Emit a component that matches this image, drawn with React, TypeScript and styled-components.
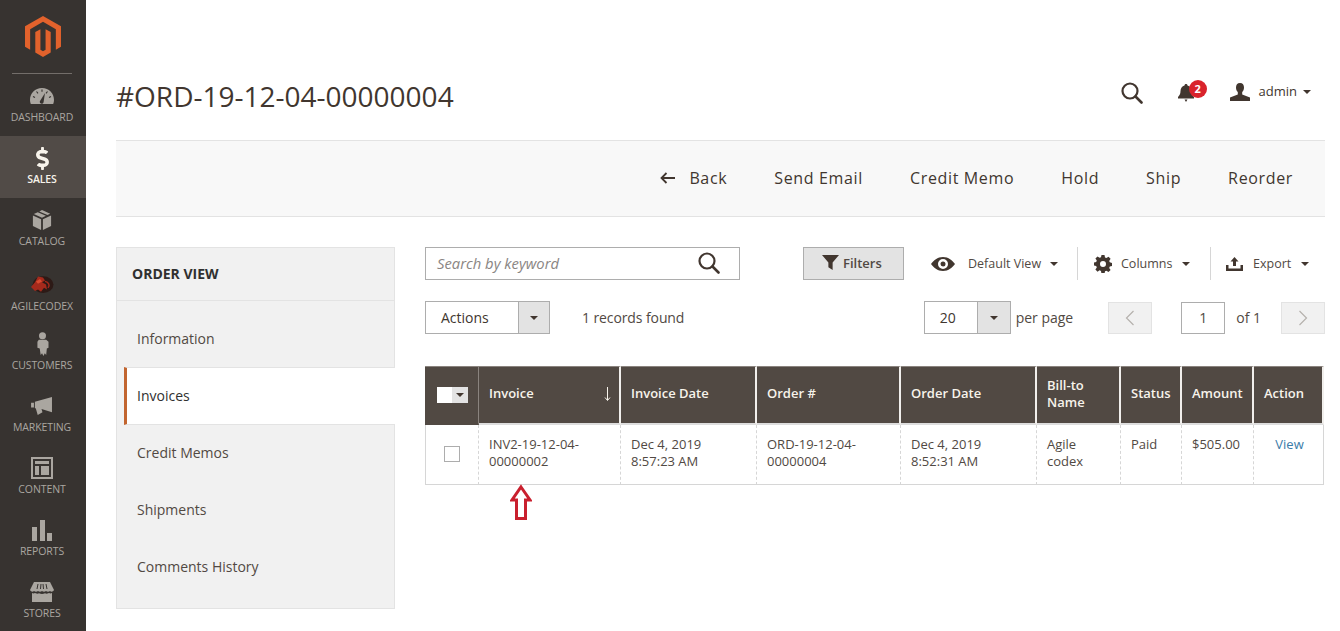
import React from "react";
import styled, { createGlobalStyle } from "styled-components";
import { FaDollarSign } from "react-icons/fa";

const GlobalStyle = createGlobalStyle`
  html, body { margin: 0; padding: 0; background: #fff; }
  body { font-family: "Open Sans", "Liberation Sans", sans-serif; color: #303030; }
  * { box-sizing: border-box; }
`;

const Page = styled.div`
  display: flex;
  width: 1340px;
  height: 631px;
  overflow: hidden;
`;

const Sidebar = styled.nav`
  width: 86px;
  flex: none;
  background: #373330;
  display: flex;
  flex-direction: column;
  align-items: stretch;
`;

const LogoBox = styled.div`
  height: 74px;
  flex: none;
  padding-top: 16px;
  display: flex;
  justify-content: center;
  align-items: flex-start;
  position: relative;
  &::after {
    content: "";
    position: absolute;
    left: 12px;
    right: 14px;
    bottom: 0;
    height: 1px;
    background: #736e6a;
  }
`;

const NavItem = styled.div<{ $active?: boolean; $h?: number }>`
  height: ${(p) => p.$h ?? 62}px;
  flex: none;
  background: ${(p) => (p.$active ? "#514b47" : "transparent")};
  color: ${(p) => (p.$active ? "#f7f3eb" : "#aaa6a0")};
  display: flex;
  flex-direction: column;
  align-items: center;
  justify-content: flex-end;
  padding: 0 2px 12px 0;
`;

const NavIcon = styled.div`
  height: 26px;
  display: flex;
  align-items: center;
  justify-content: center;
  margin-bottom: 1px;
`;

const NavLabel = styled.span<{ $active?: boolean }>`
  font-size: 10.5px;
  line-height: 14px;
  letter-spacing: -0.1px;
  font-weight: ${(p) => (p.$active ? 600 : 400)};
  text-transform: uppercase;
`;

const Main = styled.main`
  flex: 1;
  min-width: 0;
  padding: 0 15px 0 30px;
`;

const PageHeader = styled.header`
  height: 140px;
  padding-top: 54px;
  display: flex;
  align-items: center;
  justify-content: space-between;
`;

const Title = styled.h1`
  margin: -2px 0 0;
  font-size: 28px;
  font-weight: 400;
  color: #41362f;
`;

const HeaderTools = styled.div`
  display: flex;
  align-items: center;
  padding-right: 14px;
  margin-top: -9px;
`;

const BellWrap = styled.div`
  position: relative;
  margin-left: 34px;
  width: 18px;
  height: 18px;
`;

const Badge = styled.span`
  position: absolute;
  left: 12px;
  top: -4px;
  width: 18px;
  height: 18px;
  border-radius: 50%;
  background: #d9232c;
  color: #fff;
  font-size: 11px;
  font-weight: 700;
  line-height: 18px;
  text-align: center;
`;

const UserName = styled.span`
  font-size: 13px;
  color: #41362f;
  margin: -2px 0 0 9px;
`;

const UserBlock = styled.div`
  display: flex;
  align-items: center;
  margin: -2px 0 0 35px;
`;

const Caret = styled.span<{ $ml?: number; $size?: number }>`
  display: inline-block;
  margin-left: ${(p) => p.$ml ?? 6}px;
  border-top: ${(p) => p.$size ?? 5}px solid #41362f;
  border-left: ${(p) => p.$size ?? 5}px solid transparent;
  border-right: ${(p) => p.$size ?? 5}px solid transparent;
  border-bottom: 0;
`;

const ActionBar = styled.div`
  height: 77px;
  background: #f8f8f8;
  border-top: 1px solid #e3e3e3;
  border-bottom: 1px solid #e3e3e3;
  display: flex;
  justify-content: flex-end;
  align-items: center;
  gap: 47px;
  padding: 0 32px 2px 0;
`;

const ActionButton = styled.span`
  font-size: 16px;
  font-weight: 500;
  letter-spacing: 0.65px;
  color: #41362f;
  display: flex;
  align-items: center;
  gap: 13px;
`;

const Content = styled.div`
  display: flex;
  padding-top: 30px;
`;

const SidePanel = styled.aside`
  width: 279px;
  height: 362px;
  flex: none;
  background: #f1f1f1;
  border: 1px solid #e3e3e3;
  margin-right: 30px;
  display: flex;
  flex-direction: column;
`;

const PanelTitle = styled.div`
  height: 53px;
  padding: 0 0 2px 15px;
  display: flex;
  align-items: center;
  font-size: 14px;
  font-weight: 700;
  color: #303030;
  border-bottom: 1px solid #e3e3e3;
`;

const PanelLink = styled.div<{ $active?: boolean; $first?: boolean }>`
  height: ${(p) => (p.$first ? 66 : p.$active ? 58 : 57)}px;
  padding-left: ${(p) => (p.$active ? 10 : 20)}px;
  padding-top: ${(p) => (p.$first ? 10 : 0)}px;
  padding-bottom: 2px;
  display: flex;
  align-items: center;
  font-size: 14px;
  color: ${(p) => (p.$active ? "#303030" : "#514943")};
  ${(p) =>
    p.$active
      ? `
    background: #fff;
    margin: 0 -1px 0 7px;
    border-left: 3px solid #c2652f;
    border-top: 1px solid #e3e3e3;
    border-bottom: 1px solid #e3e3e3;
  `
      : ""}
`;

const Grid = styled.section`
  flex: 1;
  min-width: 0;
  position: relative;
`;

const ToolRow = styled.div`
  display: flex;
  align-items: center;
  height: 33px;
`;

const SearchBox = styled.div`
  width: 315px;
  height: 33px;
  border: 1px solid #adadad;
  display: flex;
  align-items: center;
  justify-content: space-between;
  padding: 0 19px 2px 11px;
  font-size: 14.8px;
  font-style: italic;
  color: #8a8583;
`;

const FiltersButton = styled.div`
  margin-left: 63px;
  width: 101px;
  height: 33px;
  padding: 0 0 2px 18px;
  background: #e3e3e3;
  border: 1px solid #adadad;
  display: flex;
  align-items: center;
  gap: 4px;
  font-size: 13px;
  font-weight: 600;
  color: #514943;
`;

const ToolMenu = styled.div<{ $w: number; $pl: number; $sep?: boolean }>`
  width: ${(p) => p.$w}px;
  padding-left: ${(p) => p.$pl}px;
  height: 33px;
  display: flex;
  align-items: center;
  font-size: 12.5px;
  color: #514943;
  border-left: ${(p) => (p.$sep ? "1px solid #d6d6d6" : "0")};
  white-space: nowrap;
`;

const MenuText = styled.span<{ $ml: number }>`
  margin-left: ${(p) => p.$ml}px;
`;

const SecondRow = styled(ToolRow)`
  margin-top: 21px;
  font-size: 14px;
  color: #514943;
`;

const SelectBox = styled.div<{ $w: number; $btn: number }>`
  width: ${(p) => p.$w}px;
  height: 33px;
  border: 1px solid #adadad;
  display: flex;
  font-size: 14px;
  color: #41362f;
  & > span:first-child {
    flex: 1;
    padding-left: 15px;
    line-height: 31px;
  }
  & > span:last-child {
    width: ${(p) => p.$btn}px;
    background: #e3e3e3;
    border-left: 1px solid #adadad;
    display: flex;
    align-items: center;
    justify-content: center;
  }
`;

const Records = styled.span`
  margin-left: 32px;
  letter-spacing: -0.1px;
`;

const Spring = styled.div`
  flex: 1;
`;

const PerPage = styled.span`
  margin-left: 5px;
  margin-right: 35px;
`;

const PageArrow = styled.div`
  width: 44px;
  height: 32px;
  background: #f1f1f1;
  border: 1px solid #e3e3e3;
  display: flex;
  align-items: center;
  justify-content: center;
`;

const PageInput = styled.div`
  width: 44px;
  height: 32px;
  margin-left: 29px;
  border: 1px solid #adadad;
  font-size: 14px;
  line-height: 30px;
  text-align: center;
`;

const OfPages = styled.span`
  margin: 0 20px 0 11px;
`;

const Table = styled.table`
  margin-top: 32px;
  width: 899px;
  table-layout: fixed;
  border-collapse: separate;
  border-spacing: 0;
  font-size: 13px;
`;

const Th = styled.th<{ $select?: boolean; $twoLine?: boolean }>`
  height: 59px;
  background: #514943;
  color: #f7f3eb;
  font-size: 13px;
  font-weight: 600;
  line-height: 17px;
  text-align: left;
  padding: 0 8px ${(p) => (p.$twoLine ? 2 : 4)}px 10px;
  border-right: ${(p) => (p.$select ? "1px solid #8a837e" : "2px solid #f1efec")};
  border-top: 1px solid #8a837e;
  border-bottom: 2px solid #ddd;
  position: relative;
  ${(p) => (p.$select ? "border-bottom-color: #514943;" : "")}
`;

const SortArrow = styled.svg`
  position: absolute;
  right: 8px;
  top: 20px;
`;

const HeadCheck = styled.div`
  display: flex;
  width: 31px;
  height: 16px;
  margin: 4px 0 0 2px;
  background: #fff;
  justify-content: flex-end;
  & > span {
    width: 16px;
    background: #e3e3e3;
    display: flex;
    align-items: center;
    justify-content: center;
  }
`;

const Td = styled.td<{ $first?: boolean; $last?: boolean; $center?: boolean }>`
  height: 60px;
  vertical-align: top;
  padding: 11px 8px 0 10px;
  font-size: 13px;
  line-height: 17px;
  color: #514943;
  border-bottom: 1px solid #d6d6d6;
  border-left: ${(p) => (p.$first ? "1px solid #d6d6d6" : "0")};
  border-right: ${(p) => (p.$last ? "1px solid #d6d6d6" : "1px dashed #d6d6d6")};
  text-align: ${(p) => (p.$center ? "center" : "left")};
`;

const CheckBox = styled.div`
  width: 16px;
  height: 16px;
  margin: 10px 0 0 8px;
  border: 1px solid #adadad;
`;

const ViewLink = styled.span`
  color: #3b7ca8;
`;

const ArrowMark = styled.svg`
  position: absolute;
  left: 85px;
  top: 237px;
`;

const columns = [54, 142, 136, 144, 136, 84, 61, 72, 70];

function MagentoLogo() {
  return (
    <svg width="36" height="41" viewBox="1.6 0 20.8 24" preserveAspectRatio="none">
      <path
        fill="#e2622c"
        d="M12 24l-4.455-2.572v-12l2.97-1.715v12.001l1.485.902 1.485-.902V7.713l2.97 1.715v12L12 24zM22.391 6v12l-2.97 1.714V7.713L12 3.43 4.574 7.713v12L1.609 18V6L12 0l10.391 6z"
      />
    </svg>
  );
}

function GaugeIcon() {
  return (
    <svg width="24" height="16" viewBox="0 0 24 16">
      <path fill="#aaa6a0" d="M12 0C5 0 0 5 0 12c0 1.500.3 2.800.8 4h22.400c.5-1.200.8-2.500.8-4 0-7-5-12-12-12z" />
      <path fill="#373330" d="M10 13l5-8-1.500 9.500a1.900 1.900 0 0 1-3.500-1.500z" />
      <path stroke="#373330" strokeWidth="1.100" d="M12 1.500v2.300M6.500 3.500L8 5.300M17.500 3.500L16 5.300M3 8.500l2 1M21 8.500l-2 1" />
    </svg>
  );
}

function BoxIcon() {
  return (
    <svg width="20" height="20" viewBox="0 0 20 22">
      <path fill="#aaa6a0" d="M10 0l9 4-3 1.600-9-4zM5.300 2.400l9 4L10 8.500 1 4.300zM0 6l9 4.200V22l-9-4.500zM20 6v11.500L11 22V10.200z" />
    </svg>
  );
}

function AgileIcon() {
  return (
    <svg width="24" height="20" viewBox="0 0 24 25" preserveAspectRatio="none">
      <circle cx="13" cy="12" r="10.500" fill="#2d1a16" />
      <path fill="#a52a1c" d="M1 15l4-6 3-7 5 1 2 4-3 2 4 3 1 6-3-2-3 5-3-3-3 2z" />
      <path fill="#d94a30" d="M6 8l4-3 2 3-4 3z" />
      <path fill="none" stroke="#a52a1c" strokeWidth="1.500" d="M15 8a5 5 0 0 1 3 8" />
    </svg>
  );
}

function PersonIcon() {
  return (
    <svg width="13" height="24" viewBox="0 0 14 26">
      <circle cx="7" cy="4" r="3.800" fill="#aaa6a0" />
      <path fill="#aaa6a0" d="M3 8.500h8l2.500 2V17l-1.800 1-.7 7-1.500-2-1.500 3-1.500-3L5 25l-1-7-2.500-1v-6.500z" />
    </svg>
  );
}

function MegaphoneIcon() {
  return (
    <svg width="22" height="19" viewBox="0 0 23 20">
      <path fill="#aaa6a0" d="M0 6h3v5H0zM4 5l18-5v16L11 12.500 12 16l-5 3-2-7-1-.5z" />
    </svg>
  );
}

function ContentIcon() {
  return (
    <svg width="22" height="22" viewBox="0 0 22 22">
      <path fill="#aaa6a0" fillRule="evenodd" d="M0 0h22v22H0zM2 2v18h18V2zM4 4h14v3H4zM4 9h4v9H4zM10 9h8v9h-8z" />
    </svg>
  );
}

function ReportsIcon() {
  return (
    <svg width="20" height="21" viewBox="0 0 20 21">
      <path fill="#aaa6a0" d="M0 7h5v14H0zM8 0h5v21H8zM15 13h5v8h-5z" />
    </svg>
  );
}

function StoreIcon() {
  return (
    <svg width="24" height="20" viewBox="0 0 24 20">
      <path fill="#aaa6a0" d="M4 0h16l4 8c-1 2-3 2-4 1-1 1-3 1-4 0-1 1-3 1-4 0-1 1-3 1-4 0-1 1-3 1-4 0-1 1-3 1-4-1zM2 11c1 .5 2 .5 3 0 2 1 3 1 4 .3 2 1 4 1 6 0 1 .7 2 .7 4-.3 1 .5 2 .5 3 0v9H2z" />
      <path stroke="#373330" strokeWidth="1" d="M8 2L7 7M11 2l-.5 5M13 2l.5 5M16 2l1 5" />
    </svg>
  );
}

function SearchIcon({ size }: { size: number }) {
  return (
    <svg width={size} height={size} viewBox="0 0 22 22" fill="none" stroke="#41362f" strokeWidth="2.200">
      <circle cx="9" cy="9" r="7.500" />
      <path strokeWidth="2.600" strokeLinecap="round" d="M14.500 14.500L20.500 20.500" />
    </svg>
  );
}

function BellIcon() {
  return (
    <svg width="18" height="18" viewBox="0 0 18 18">
      <path fill="#41362f" d="M9 0c1 0 1.500.7 1.500 1.500C13 2.300 14.500 4.500 14.500 7c0 3 1 4.500 2.500 6v1.500H1V13c1.500-1.500 2.500-3 2.500-6 0-2.500 1.500-4.700 4-5.500C7.500.7 8 0 9 0zM7.500 15.500h3L9 18z" />
    </svg>
  );
}

function UserIcon() {
  return (
    <svg width="20" height="18" viewBox="0 0 20 18">
      <path fill="#41362f" d="M10 0c2.800 0 4 2 4 4.500 0 2-.8 3.500-1.800 4.500v2.500L20 14.500V18H0v-3.500l7.800-3V9C6.800 8 6 6.500 6 4.500 6 2 7.200 0 10 0z" />
    </svg>
  );
}

function BackArrow() {
  return (
    <svg width="16" height="12" viewBox="0 0 16 12" fill="none" stroke="#41362f" strokeWidth="1.800">
      <path d="M15 6H2M6.500 1L1.500 6l5 5" />
    </svg>
  );
}

function FunnelIcon() {
  return (
    <svg width="17" height="15" viewBox="0 0 16 14" preserveAspectRatio="none">
      <path fill="#41362f" d="M0 0h16L10 7v7L6 11.500V7z" />
    </svg>
  );
}

function EyeIcon() {
  return (
    <svg width="24" height="14" viewBox="0 0 24 14">
      <path fill="#41362f" fillRule="evenodd" d="M12 0c5.500 0 9.500 3.500 12 7-2.500 3.500-6.500 7-12 7S2.500 10.500 0 7c2.500-3.500 6.500-7 12-7zm0 2a5 5 0 1 0 0 10 5 5 0 0 0 0-10zm0 2.500a2.500 2.500 0 1 1 0 5 2.500 2.500 0 0 1 0-5z" />
    </svg>
  );
}

function GearIcon() {
  return (
    <svg width="18" height="18" viewBox="0 0 18 18">
      <path
        fill="#41362f"
        fillRule="evenodd"
        d="M7.500 0h3l.5 2.500 1.400.6 2.100-1.400 2.100 2.100-1.400 2.100.6 1.400 2.200.7v3l-2.200.5-.6 1.400 1.400 2.100-2.100 2.100-2.100-1.400-1.400.6-.5 2.600h-3L7 15.900l-1.400-.6-2.100 1.400-2.100-2.100 1.400-2.100-.6-1.400L0 10.500v-3l2.200-.5.6-1.400-1.400-2.100 2.100-2.100 2.100 1.400L7 2.200zM9 6a3 3 0 1 0 0 6 3 3 0 0 0 0-6z"
      />
    </svg>
  );
}

function UploadIcon() {
  return (
    <svg width="17" height="14" viewBox="0 0 17 14">
      <path fill="#41362f" d="M8.500 0l4 4.500H10V9H7V4.500H4.500zM0 8h2.500v3.500h12V8H17v6H0z" />
    </svg>
  );
}

function Chevron({ dir }: { dir: "left" | "right" }) {
  return (
    <svg width="10" height="16" viewBox="0 0 10 16" fill="none" stroke="#b5b1ad" strokeWidth="1.200">
      <path d={dir === "left" ? "M8.500 1L1.500 8l7 7" : "M1.500 1l7 7-7 7"} />
    </svg>
  );
}

const navItems: { label: string; icon: React.ReactNode; active?: boolean; h?: number }[] = [
  { label: "Dashboard", icon: <GaugeIcon /> },
  { label: "Sales", icon: <FaDollarSign size={23} color="#f7f3eb" />, active: true },
  { label: "Catalog", icon: <BoxIcon /> },
  { label: "AgileCodex", icon: <AgileIcon />, h: 65 },
  { label: "Customers", icon: <PersonIcon />, h: 59 },
  { label: "Marketing", icon: <MegaphoneIcon /> },
  { label: "Content", icon: <ContentIcon /> },
  { label: "Reports", icon: <ReportsIcon /> },
  { label: "Stores", icon: <StoreIcon /> },
];

const panelLinks = ["Information", "Invoices", "Credit Memos", "Shipments", "Comments History"];

export default function App() {
  return (
    <Page>
      <GlobalStyle />
      <Sidebar>
        <LogoBox>
          <MagentoLogo />
        </LogoBox>
        {navItems.map((item) => (
          <NavItem key={item.label} $active={item.active} $h={item.h}>
            <NavIcon>{item.icon}</NavIcon>
            <NavLabel $active={item.active}>{item.label}</NavLabel>
          </NavItem>
        ))}
      </Sidebar>
      <Main>
        <PageHeader>
          <Title>#ORD-19-12-04-00000004</Title>
          <HeaderTools>
            <SearchIcon size={22} />
            <BellWrap>
              <BellIcon />
              <Badge>2</Badge>
            </BellWrap>
            <UserBlock>
              <UserIcon />
              <UserName>admin</UserName>
              <Caret $size={4} />
            </UserBlock>
          </HeaderTools>
        </PageHeader>
        <ActionBar>
          <ActionButton>
            <BackArrow />
            Back
          </ActionButton>
          <ActionButton>Send Email</ActionButton>
          <ActionButton>Credit Memo</ActionButton>
          <ActionButton>Hold</ActionButton>
          <ActionButton>Ship</ActionButton>
          <ActionButton>Reorder</ActionButton>
        </ActionBar>
        <Content>
          <SidePanel>
            <PanelTitle>ORDER VIEW</PanelTitle>
            {panelLinks.map((link, i) => (
              <PanelLink key={link} $first={i === 0} $active={link === "Invoices"}>
                {link}
              </PanelLink>
            ))}
          </SidePanel>
          <Grid>
            <ToolRow>
              <SearchBox>
                Search by keyword
                <SearchIcon size={22} />
              </SearchBox>
              <FiltersButton>
                <FunnelIcon />
                Filters
              </FiltersButton>
              <ToolMenu $w={173} $pl={27}>
                <EyeIcon />
                <MenuText $ml={13}>Default View</MenuText>
                <Caret $ml={9} $size={4} />
              </ToolMenu>
              <ToolMenu $w={133} $pl={16} $sep>
                <GearIcon />
                <MenuText $ml={9}>Columns</MenuText>
                <Caret $ml={10} $size={4} />
              </ToolMenu>
              <ToolMenu $w={115} $pl={15} $sep>
                <UploadIcon />
                <MenuText $ml={10}>Export</MenuText>
                <Caret $ml={10} $size={4} />
              </ToolMenu>
            </ToolRow>
            <SecondRow>
              <SelectBox $w={125} $btn={31}>
                <span>Actions</span>
                <span>
                  <Caret $ml={0} $size={4} />
                </span>
              </SelectBox>
              <Records>1 records found</Records>
              <Spring />
              <SelectBox $w={87} $btn={33}>
                <span>20</span>
                <span>
                  <Caret $ml={0} $size={4} />
                </span>
              </SelectBox>
              <PerPage>per page</PerPage>
              <PageArrow>
                <Chevron dir="left" />
              </PageArrow>
              <PageInput>1</PageInput>
              <OfPages>of 1</OfPages>
              <PageArrow>
                <Chevron dir="right" />
              </PageArrow>
            </SecondRow>
            <Table>
              <colgroup>
                {columns.map((w, i) => (
                  <col key={i} style={{ width: w }} />
                ))}
              </colgroup>
              <thead>
                <tr>
                  <Th $select>
                    <HeadCheck>
                      <span>
                        <Caret $ml={0} $size={4} />
                      </span>
                    </HeadCheck>
                  </Th>
                  <Th>
                    Invoice
                    <SortArrow width="7" height="14" viewBox="0 0 7 14" fill="none" stroke="#f7f3eb" strokeWidth="1">
                      <path d="M3.500 0v13M1 10.500l2.500 3 2.500-3" />
                    </SortArrow>
                  </Th>
                  <Th>Invoice Date</Th>
                  <Th>Order #</Th>
                  <Th>Order Date</Th>
                  <Th $twoLine>
                    Bill-to
                    <br />
                    Name
                  </Th>
                  <Th>Status</Th>
                  <Th>Amount</Th>
                  <Th>Action</Th>
                </tr>
              </thead>
              <tbody>
                <tr>
                  <Td $first>
                    <CheckBox />
                  </Td>
                  <Td>
                    INV2-19-12-04-
                    <br />
                    00000002
                  </Td>
                  <Td>
                    Dec 4, 2019
                    <br />
                    8:57:23 AM
                  </Td>
                  <Td>
                    ORD-19-12-04-
                    <br />
                    00000004
                  </Td>
                  <Td>
                    Dec 4, 2019
                    <br />
                    8:52:31 AM
                  </Td>
                  <Td>
                    Agile
                    <br />
                    codex
                  </Td>
                  <Td>Paid</Td>
                  <Td>$505.00</Td>
                  <Td $last $center>
                    <ViewLink>View</ViewLink>
                  </Td>
                </tr>
              </tbody>
            </Table>
            <ArrowMark width="22" height="36" viewBox="0 0 22 36">
              <path fill="#fff" stroke="#c9202e" strokeWidth="3" d="M11 3L20 16H15.500V34.500H6.500V16H2z" />
            </ArrowMark>
          </Grid>
        </Content>
      </Main>
    </Page>
  );
}
